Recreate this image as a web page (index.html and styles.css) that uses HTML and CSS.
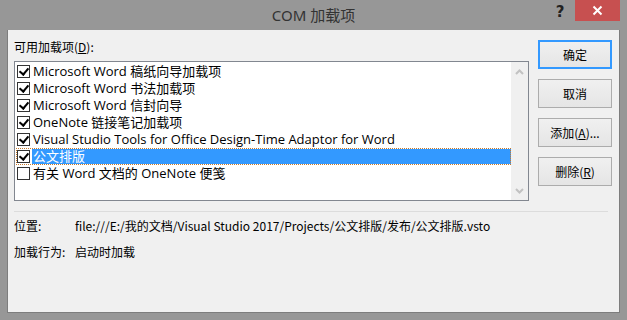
FILE: index.html
```html
<!DOCTYPE html>
<html lang="zh">
<head>
<meta charset="utf-8">
<title>COM 加载项</title>
<link rel="stylesheet" href="styles.css">
</head>
<body>
<div class="window">
  <div class="titlebar">
    <div></div>
    <div class="title">COM 加载项</div>
    <div class="caption-btns">
      <span class="help">?</span>
      <span class="close"><svg width="11" height="11" viewBox="0 0 11 11"><path d="M1.5 1.5 L9.5 9.5 M9.5 1.5 L1.5 9.5" stroke="#fff" stroke-width="2"/></svg></span>
    </div>
  </div>
  <div class="client">
    <div class="top">
      <div class="left">
        <div class="label">可用加载项(<u>D</u>):</div>
        <div class="listbox">
          <div class="items">
            <div class="item"><span class="cb on"></span><span>Microsoft Word 稿纸向导加载项</span></div>
            <div class="item"><span class="cb on"></span><span>Microsoft Word 书法加载项</span></div>
            <div class="item"><span class="cb on"></span><span>Microsoft Word 信封向导</span></div>
            <div class="item"><span class="cb on"></span><span>OneNote 链接笔记加载项</span></div>
            <div class="item"><span class="cb on"></span><span>Visual Studio Tools for Office Design-Time Adaptor for Word</span></div>
            <div class="item selected"><span class="cb on"></span><span class="seltext">公文排版</span></div>
            <div class="item"><span class="cb"></span><span>有关 Word 文档的 OneNote 便笺</span></div>
          </div>
          <div class="scrollbar">
            <svg width="9" height="6" viewBox="0 0 9 6"><path d="M1 5 L4.5 1.5 L8 5" stroke="#c2c2c2" stroke-width="2" fill="none"/></svg>
            <svg width="9" height="6" viewBox="0 0 9 6"><path d="M1 1 L4.5 4.5 L8 1" stroke="#c2c2c2" stroke-width="2" fill="none"/></svg>
          </div>
        </div>
      </div>
      <div class="buttons">
        <button class="btn default">确定</button>
        <button class="btn">取消</button>
        <button class="btn">添加(<u>A</u>)...</button>
        <button class="btn">删除(<u>R</u>)</button>
      </div>
    </div>
    <div class="sep"></div>
    <div class="info">
      <div class="row"><span class="k">位置:</span><span class="v">file:///E:/我的文档/Visual Studio 2017/Projects/公文排版/发布/公文排版.vsto</span></div>
      <div class="row"><span class="k">加载行为:</span><span class="v">启动时加载</span></div>
    </div>
  </div>
</div>
</body>
</html>
```
FILE: styles.css
```css
* { box-sizing: border-box; }
html, body { margin: 0; padding: 0; }
body {
  width: 627px; height: 320px; overflow: hidden;
  font-family: "Open Sans", "Noto Sans CJK SC", sans-serif;
  font-size: 12px; color: #000;
}
.window {
  width: 627px; height: 320px;
  background: #979797;
  padding: 0 7px 7px 7px;
  display: flex; flex-direction: column;
}
.titlebar {
  height: 30px;
  display: grid;
  grid-template-columns: 1fr auto 1fr;
  margin: 0 -7px;
}
.title {
  font-family: "Noto Sans", "Noto Sans CJK SC", sans-serif;
  font-size: 15px; color: #333;
  line-height: 30px; padding-top: 0;
}
.caption-btns {
  display: flex; justify-content: flex-end; align-items: flex-start;
  padding-right: 7px;
}
.help {
  font-family: "DejaVu Sans", sans-serif; font-weight: bold;
  font-size: 15px; color: #222;
  width: 30px; text-align: center; line-height: 24px;
  margin-right: 0;
}
.close {
  width: 45px; height: 21px; background: #c75050;
  display: flex; align-items: center; justify-content: center;
}
.client {
  flex: 1;
  background: #f0f0f0;
  border: 1px solid #7d7d7d;
  border-top: none;
  padding: 8px 6px 0 6px;
  display: flex; flex-direction: column;
}
.top { display: flex; gap: 9px; }
.left { width: 515px; }
.label {
  font-family: "Noto Sans CJK SC", sans-serif;
  font-size: 12px; line-height: 17px; height: 23px;
  padding-left: 0;
}
.listbox {
  height: 140px;
  border: 1px solid #828790;
  background: #fff;
  display: flex;
}
.items { flex: 1; padding: 1px 0 0 1px; }
.item {
  height: 17px; display: flex; align-items: center;
  font-size: 13px; line-height: 17px; white-space: nowrap;
  padding-left: 1px;
}
.item .cb {
  width: 13px; height: 13px; border: 1px solid #333; background: #fff;
  margin-right: 3px; flex: none; position: relative;
}
.item .cb.on::after {
  content: ""; position: absolute; left: 3px; top: 0px;
  width: 4px; height: 7px;
  border: solid #000; border-width: 0 2px 2px 0;
  transform: rotate(40deg);
}
.item.selected { outline: 1px dotted #c77a2b; outline-offset: -1px; }
.item.selected .seltext {
  flex: 1; background: #3399ff; color: #fff; height: 15px; line-height: 15px;
  margin-left: -1px; padding-left: 1px;
}
.scrollbar {
  width: 17px; background: #f0f0f0;
  display: flex; flex-direction: column; justify-content: space-between; align-items: center;
  padding: 7px 0 6px;
}
.buttons {
  display: flex; flex-direction: column; gap: 10px; padding-top: 2px;
}
.btn {
  width: 74px; height: 29px;
  font-family: "Noto Sans CJK SC", sans-serif; font-size: 12px; color: #000;
  background: linear-gradient(#f0f0f0, #e5e5e5);
  border: 1px solid #acacac; padding: 0;
}
.btn.default { border: 1px solid #3399ff; box-shadow: inset 0 0 0 1px #3399ff; }
.sep { height: 1px; background: #dcdcdc; margin: 10px 5px 0 0; }
.info { padding-top: 6px; font-family: "Noto Sans CJK SC", sans-serif; font-size: 12px; }
.row { display: flex; height: 26px; line-height: 16px; }
.k { width: 61px; flex: none; }
```
